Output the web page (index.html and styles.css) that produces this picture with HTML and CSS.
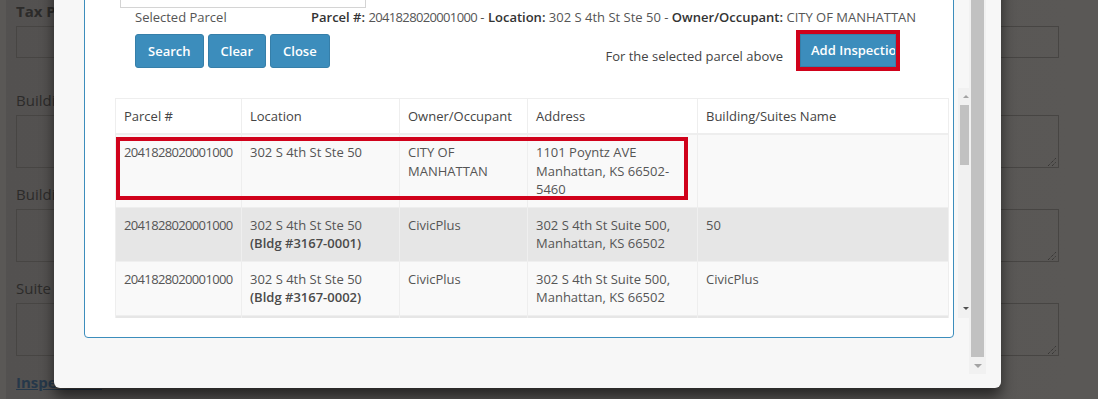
FILE: index.html
```html
<!DOCTYPE html>
<html lang="en">
<head>
<meta charset="utf-8">
<title>Parcel Search</title>
<link rel="stylesheet" href="styles.css">
</head>
<body>
<div class="page">
  <div class="page-inner">
    <div class="field first">
      <div class="lbl bold">Tax Parcel #</div>
      <div class="box input"></div>
    </div>
    <div class="field">
      <div class="lbl">Building Name</div>
      <div class="box textarea"><svg class="grip" width="9" height="9" viewBox="0 0 9 9"><path d="M1 9L9 1M5 9L9 5" stroke="#2c2b2a" stroke-width="1" stroke-dasharray="1 1"/></svg></div>
    </div>
    <div class="field">
      <div class="lbl">Building Description</div>
      <div class="box textarea"><svg class="grip" width="9" height="9" viewBox="0 0 9 9"><path d="M1 9L9 1M5 9L9 5" stroke="#2c2b2a" stroke-width="1" stroke-dasharray="1 1"/></svg></div>
    </div>
    <div class="field">
      <div class="lbl">Suite Description</div>
      <div class="box textarea"><svg class="grip" width="9" height="9" viewBox="0 0 9 9"><path d="M1 9L9 1M5 9L9 5" stroke="#2c2b2a" stroke-width="1" stroke-dasharray="1 1"/></svg></div>
    </div>
    <a class="link">Inspections</a>
  </div>
</div>

<div class="modal">
  <div class="modal-body">
    <div class="content">
      <div class="panel">
        <div class="search-input"></div>
        <div class="selected-row">
          <span class="sel-label">Selected Parcel</span>
          <span class="sel-info"><b>Parcel #:</b> <span class="pn">2041828020001000</span> - <b>Location:</b> 302 S 4th St Ste 50 - <b>Owner/Occupant:</b> CITY OF MANHATTAN</span>
        </div>
        <div class="actions">
          <div class="btn-group">
            <button class="btn">Search</button>
            <button class="btn">Clear</button>
            <button class="btn">Close</button>
          </div>
          <div class="add-group">
            <span class="hint">For the selected parcel above</span>
            <div class="highlight"><button class="btn btn-add">Add Inspection</button></div>
          </div>
        </div>
        <div class="results">
          <div class="table-scroll">
            <table class="grid">
              <colgroup>
                <col class="c1"><col class="c2"><col class="c3"><col class="c4"><col class="c5">
              </colgroup>
              <thead>
                <tr><th>Parcel #</th><th>Location</th><th>Owner/Occupant</th><th>Address</th><th>Building/Suites Name</th></tr>
              </thead>
              <tbody>
                <tr>
                  <td><span class="pn">2041828020001000</span></td>
                  <td>302 S 4th St Ste 50</td>
                  <td>CITY OF MANHATTAN</td>
                  <td>1101 Poyntz AVE<br>Manhattan, KS 66502-5460</td>
                  <td></td>
                </tr>
                <tr>
                  <td><span class="pn">2041828020001000</span></td>
                  <td>302 S 4th St Ste 50<br><span class="bldg">(Bldg #3167-0001)</span></td>
                  <td>CivicPlus</td>
                  <td>302 S 4th St Suite 500, Manhattan, KS 66502</td>
                  <td>50</td>
                </tr>
                <tr>
                  <td><span class="pn">2041828020001000</span></td>
                  <td>302 S 4th St Ste 50<br><span class="bldg">(Bldg #3167-0002)</span></td>
                  <td>CivicPlus</td>
                  <td>302 S 4th St Suite 500, Manhattan, KS 66502</td>
                  <td>CivicPlus</td>
                </tr>
                <tr>
                  <td><span class="pn">2041828020001000</span></td>
                  <td>302 S 4th St Ste 50<br><span class="bldg">(Bldg #3167-0003)</span></td>
                  <td>CivicPlus</td>
                  <td>302 S 4th St Suite 500, Manhattan, KS 66502</td>
                  <td>CivicPlus</td>
                </tr>
              </tbody>
            </table>
            <div class="mark"></div>
          </div>
          <div class="vbar inner">
            <div class="arr up"></div>
            <div class="thumb"></div>
            <div class="spacer"></div>
            <div class="arr down"></div>
          </div>
        </div>
      </div>
    </div>
    <div class="vbar outer">
      <div class="thumb"></div>
      <div class="arr-btn"><div class="arr down light"></div></div>
    </div>
  </div>
</div>
</body>
</html>
```

FILE: styles.css
```css
html, body {
  margin: 0;
  padding: 0;
}
body {
  width: 1098px;
  height: 399px;
  overflow: hidden;
  background: #555352;
  font-family: "Open Sans", "Noto Sans", sans-serif;
  position: relative;
}

/* ---------- background page (under the backdrop) ---------- */
.page {
  height: 399px;
  padding-left: 6px;
  box-sizing: border-box;
  background: #5a5856;
}
.page-inner {
  width: 1063px;
  height: 399px;
  box-sizing: border-box;
  padding: 1px 0 0 10px;
  background: linear-gradient(to right, #535150, #5a5856);
}
.field {
  margin-bottom: 16px;
}
.field.first {
  margin-bottom: 32px;
}
.lbl {
  font-size: 15px;
  line-height: 20px;
  color: #2c2b2a;
  white-space: nowrap;
}
.lbl.bold {
  font-weight: 700;
}
.box {
  margin-top: 5px;
  width: 1043px;
  border: 1px solid #474543;
  box-sizing: border-box;
  position: relative;
}
.box.input {
  height: 32px;
}
.box.textarea {
  height: 53px;
}
.grip {
  position: absolute;
  right: 2px;
  bottom: 1px;
}
.link {
  display: block;
  font-size: 15px;
  line-height: 20px;
  font-weight: 700;
  color: #26384a;
  text-decoration: underline;
}

/* ---------- modal ---------- */
.modal {
  position: absolute;
  left: 54px;
  top: -40px;
  width: 947px;
  height: 428px;
  background: #f7f7f7;
  border-radius: 6px;
  box-shadow: 0 9px 14px rgba(0, 0, 0, 0.55);
}
.modal-body {
  display: flex;
  height: 414px;
  padding-right: 15px;
}
.content {
  width: 915px;
  flex-shrink: 0;
  padding-left: 30px;
  box-sizing: border-box;
}
.panel {
  width: 870px;
  height: 378px;
  box-sizing: border-box;
  border: 1px solid #3c8dbc;
  border-radius: 4px;
  background: #fff;
  padding: 13px 0 0 30px;
  font-size: 13px;
  color: #555;
}
.search-input {
  margin-left: 5px;
  width: 246px;
  height: 34px;
  box-sizing: border-box;
  border: 1px solid #d4d4d4;
  background: #fff;
}
.selected-row {
  margin: 0 0 0 20px;
  display: flex;
  line-height: 18.5px;
  white-space: nowrap;
}
.sel-label {
  width: 176px;
  flex-shrink: 0;
}
.sel-info b {
  font-weight: 600;
  color: #333;
}
.pn {
  letter-spacing: -0.65px;
}
.actions {
  margin-top: 3px;
  display: flex;
  align-items: flex-start;
}
.btn-group {
  margin: 4px 0 0 20px;
  display: flex;
  gap: 4px;
}
.btn {
  font-family: "Open Sans", "Noto Sans", sans-serif;
  font-size: 13px;
  font-weight: 600;
  line-height: 18px;
  color: #fff;
  background: #3c8dbc;
  border: 1px solid #367fa9;
  border-radius: 3px;
  padding: 7px 12px;
  height: 34px;
  box-sizing: border-box;
}
.add-group {
  margin-left: auto;
  margin-right: 53px;
  display: flex;
  align-items: flex-start;
}
.hint {
  margin: 17px 13px 0 0;
  line-height: 18.5px;
  color: #444;
}
.highlight {
  border: 4px solid #d0021b;
  display: flex;
}
.btn.btn-add {
  width: 96px;
  height: 33px;
  border-radius: 0;
  padding: 6px 0 7px 10px;
  text-align: left;
  white-space: nowrap;
  overflow: hidden;
}
.results {
  margin-top: 17px;
  display: flex;
  width: 854px;
  height: 230px;
}
.table-scroll {
  width: 843px;
  flex-shrink: 0;
  height: 230px;
  padding-top: 10px;
  box-sizing: border-box;
  overflow: hidden;
  position: relative;
}
.grid {
  width: 833px;
  table-layout: fixed;
  border-collapse: collapse;
  font-size: 13px;
  line-height: 18.5px;
}
.c1 { width: 126px; }
.c2 { width: 158px; }
.c3 { width: 128px; }
.c4 { width: 170px; }
.c5 { width: 251px; }
.grid th,
.grid td {
  border: 1px solid #eee;
  padding: 8px;
  text-align: left;
  vertical-align: top;
}
.grid th {
  font-weight: 400;
  color: #444;
  background: #fff;
  border-bottom: 2px solid #eee;
}
.grid td {
  color: #555;
}
.grid tbody tr:nth-child(odd) td {
  background: #f9f9f9;
}
.grid tbody tr:nth-child(even) td {
  background: #e6e6e6;
  border-color: #efefef;
}
.bldg {
  font-weight: 600;
  color: #4a4a4a;
}
.mark {
  position: absolute;
  left: 1px;
  top: 49px;
  width: 572px;
  height: 63px;
  box-sizing: border-box;
  border: 4px solid #d0021b;
}

/* ---------- scrollbars ---------- */
.vbar {
  flex-shrink: 0;
  background: #f1f1f1;
  display: flex;
  flex-direction: column;
}
.vbar.inner {
  width: 11px;
  height: 230px;
}
.vbar.inner .arr.up {
  margin: 7px 0 0 5px;
  width: 0;
  height: 0;
  border-left: 3px solid transparent;
  border-right: 3px solid transparent;
  border-bottom: 3px solid #a3a3a3;
}
.vbar.inner .thumb {
  margin: 7px 0 0 2px;
  width: 9px;
  height: 60px;
  background: #c1c1c1;
}
.spacer {
  flex: 1;
}
.vbar.inner .arr.down {
  margin: 0 0 8px 5px;
  width: 0;
  height: 0;
  border-left: 3px solid transparent;
  border-right: 3px solid transparent;
  border-top: 3px solid #505050;
}
.vbar.outer {
  width: 17px;
  height: 414px;
}
.vbar.outer .thumb {
  margin: 0 2px;
  height: 397px;
  background: #c1c1c1;
}
.arr-btn {
  height: 17px;
  display: flex;
  align-items: center;
  justify-content: center;
}
.arr.down.light {
  width: 0;
  height: 0;
  border-left: 4px solid transparent;
  border-right: 4px solid transparent;
  border-top: 4px solid #a3a3a3;
}
```
